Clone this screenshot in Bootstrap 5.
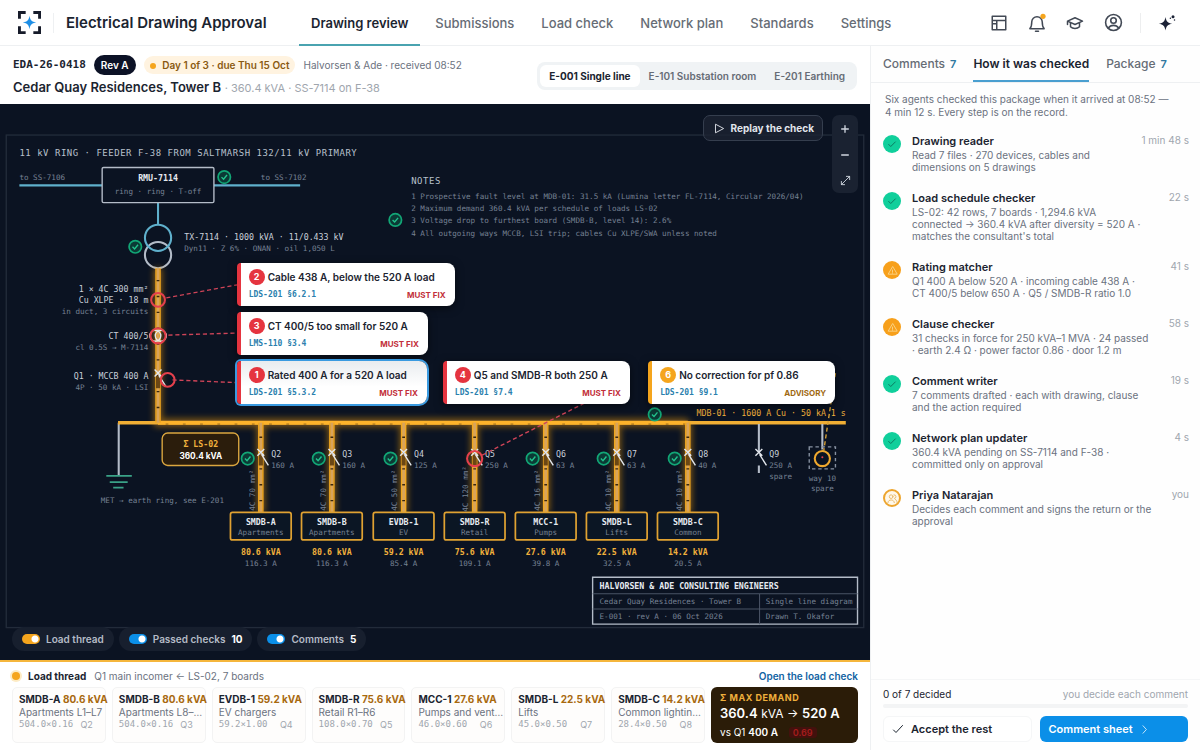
<!DOCTYPE html>
<html lang="en">
<head>
<meta charset="utf-8">
<meta name="viewport" content="width=device-width, initial-scale=1">
<title>Electrical Drawing Approval</title>
<link href="https://cdn.jsdelivr.net/npm/bootstrap@5.3.0/dist/css/bootstrap.min.css" rel="stylesheet">
<style>
:root{--ink:#1b2430;--soft:#6b7280;--faint:#a0a6ae;--amber:#f5a51d;--red:#e5343f;--blue:#0b8fe8;--mono:"DejaVu Sans Mono","Liberation Mono",monospace}
body{font-family:Inter,"Liberation Sans",sans-serif;font-size:10px;line-height:12px;color:var(--ink);background:#fff}
a{text-decoration:none}
button{font:inherit}
.mono{font-family:var(--mono)}
.f10{font-size:10px;line-height:14px}
.f11{font-size:11px;line-height:14px}
.f12{font-size:12px;line-height:16px}
.soft{color:var(--soft)}
.faint{color:var(--faint)}
.ico{fill:none;stroke:currentColor;stroke-width:2;stroke-linecap:round;stroke-linejoin:round}
/* top bar */
.topbar{height:46px;border-bottom:1px solid #eef0f2;padding:0 24px 0 18px}
.brand-name{font-size:15px;line-height:20px;font-weight:600;padding-left:12px;margin-left:12px;border-left:1px solid #eef0f2;width:246px}
.main-tabs{gap:3px}
.main-tabs a{font-size:13px;line-height:46px;height:46px;padding:0 12px;color:#666c75;font-weight:500;border-bottom:2px solid transparent}
.main-tabs a.active{color:var(--ink);font-weight:600;border-color:#4aa3b0}
.tools{gap:20px}
.tools button{border:0;background:none;padding:0;color:#424955;display:flex}
.tools .vr{opacity:.08;margin:0 -3px}
/* page frame */
.review{flex:1 1 72.5%;min-width:0}
.agents{flex:0 0 27.5%;border-left:1px solid #eef0f2;background:#fefefe}
.subhead{padding:9px 13px 8px;height:58px}
.docname{font-size:13px;line-height:18px;margin-top:3px}
.revtag{background:#0c1226;color:#fff;border-radius:10px;padding:3px 7px;font-weight:600}
.duetag{background:#fff3e0;color:#8a5a12;border-radius:10px;padding:2px 6px;font-weight:600}
.dot{width:6px;height:6px;border-radius:50%;background:var(--amber);display:inline-block}
.segments{background:#f0f3f5;border-radius:8px;padding:3px}
.segments button{border:0;background:none;border-radius:6px;padding:4px 9px;font-weight:600;color:#666c75;line-height:14px}
.segments button.active{background:#fff;color:var(--ink);font-weight:700}
/* drawing */
.stage{background:#0b1322;border-bottom:2px solid #f5b63c}
.sheet{aspect-ratio:870/556;width:100%}
.sheet svg.plan{width:100%;height:100%;display:block}
.plan text{font-family:var(--mono);font-size:11px;fill:#768193}
.plan .t12{font-size:12px;fill:#c9d0da}
.plan .t13{font-size:13px;letter-spacing:.06em;fill:#b8c0cc}
.plan .name{font-size:12px;font-weight:700;fill:#e6eaf0}
.plan .load{font-size:12px;font-weight:700;fill:#f0b03c}
.plan .mid{text-anchor:middle}
.plan .end{text-anchor:end}
.plan .hv{stroke:#5fb0cc;stroke-width:3;fill:none}
.plan .grey{stroke:#b4bcc8;stroke-width:3;fill:none}
.plan .lead-red{stroke:#cf4458;stroke-width:2;stroke-dasharray:6 4}
.plan .ring{stroke:#e5404c;stroke-width:3;fill:none}
.callout{border:0;border-left:4px solid var(--red);border-radius:4px 8px 8px 4px;background:#fff;color:var(--ink);padding:6px 9px 5px 8px;min-width:187px;text-align:left;box-shadow:0 2px 8px #0008}
.callout.advice{border-color:var(--amber)}
.callout.picked{box-shadow:0 0 0 2px #3a9ae0;background:linear-gradient(#e9ecef,#fff 60%)}
.callout .top{display:flex;align-items:center;gap:3px}
.callout .num{width:16px;height:16px;border-radius:50%;background:var(--red);color:#fff;font-size:9px;line-height:16px;text-align:center;font-weight:700}
.callout.advice .num{background:var(--amber)}
.callout .ttl{font-weight:600;padding-right:11px;white-space:nowrap}
.callout .ref{font-family:var(--mono);font-size:8px;font-weight:700;color:#2b7fae}
.callout .sev{font-size:8px;font-weight:700;color:#c22f39}
.callout.advice .sev{color:#a06a12}
.c2{left:27.2%;top:28.6%}.c3{left:27.2%;top:37.4%}.c1{left:27.2%;top:46.2%}.c4{left:50.9%;top:46.2%}.c6{left:74.5%;top:46.2%}
.replay{right:47px;top:11px;background:#1b2332cc;border:1px solid #353e4e;border-radius:7px;color:#e1e5eb;font-weight:700;padding:5px 8px 5px 10px;gap:6px}
.zoomer{right:12px;top:11px;background:#1a2231;border-radius:7px;width:26px}
.zoomer button{border:0;background:none;height:26px;width:26px;color:#cfd5de;padding:0}
.layers{left:12px;bottom:9px;gap:5px}
.layers label{background:#171f2e;border-radius:12px;padding:5px 10px;color:#b4bbc6;font-weight:600;gap:6px;line-height:14px}
.layers b{color:#fff;font-weight:700}
.layers input{appearance:none;width:18px;height:10px;margin:0;border-radius:5px;background:radial-gradient(circle at 13px 5px,#fff 3px,transparent 4px) var(--blue)}
.layers .warm input{background-color:var(--amber)}
/* load thread */
.thread{padding:7px 12px 9px}
.thread .halo{width:8px;height:8px;border-radius:50%;background:var(--amber);box-shadow:0 0 0 2px #fdebc4}
.boards{gap:6px}
.board{flex:1 1 0;min-width:0;border:1px solid #f3f3f3;border-radius:5px;background:#fefdfc;padding:5px 0 8px 6px;white-space:nowrap}
.board h3{font-size:10px;line-height:13px;font-weight:700;margin:0}
.board h3 span{color:#a8690f}
.board .rowline{display:flex;justify-content:space-between;padding-right:12px;line-height:13px;color:var(--faint);font-size:9px}
.board .calc{font-family:var(--mono)}
.total{flex:0 0 147px;background:#2b1c08;border-radius:6px;color:#fff;padding:4px 9px;white-space:nowrap}
.total h3{font-size:9px;line-height:14px;font-weight:700;letter-spacing:.06em;color:#f0b03c;margin:0}
.total p{font-size:13px;line-height:16px;margin:0}
.gap-tag{background:#43110d;color:#a31c1c;border-radius:3px;padding:0 4px;font-size:9px;font-weight:600}
/* agents */
.side-tabs{padding:0 12px;gap:17px;border-bottom:1px solid #eef0f2}
.side-tabs a{font-size:12px;line-height:36px;height:36px;color:#666c75;font-weight:500;border-bottom:2px solid transparent;white-space:nowrap}
.side-tabs a.active{color:var(--ink);font-weight:600;border-color:#4a9fd0}
.side-tabs b{font-size:11px;font-weight:600;color:#2f78a0;margin-left:5px}
.intro{padding:10px 14px 0;margin:0 0 15px;line-height:13px}
.steps{padding:0 11px 0 12px;margin:0}
.step{gap:11px;margin-bottom:18px}
.step .mark-dot{flex:none;width:18px;height:18px;margin-top:1px;border-radius:50%;background:#10cf9b;color:#0b6a55;display:flex;align-items:center;justify-content:center}
.step .warn{background:#f7a01b;color:#fbd489}
.step .person{background:#fff8ea;border:2px solid #eda52e;color:#e8b765}
.step h3{font-size:11px;line-height:15px;font-weight:600;margin:0}
.step p{margin:0;max-width:252px}
.decide{padding:0 12px 10px;border-top:1px solid #f5f6f7}
.decide .progress{height:4px;background:#f3f4f5}
.decide .btn{flex:1 1 0;font-size:11px;line-height:14px;font-weight:600;padding:5px 8px;border-radius:6px;text-align:left;display:flex;align-items:center;gap:7px}
.btn-rest{background:#fff;border-color:#f5f6f7;color:var(--ink)}
.btn-sheet{background:var(--blue);color:#fff}
</style>
</head>
<body class="min-vh-100 d-flex flex-column">

<header class="topbar d-flex align-items-center">
  <svg width="23" height="23" viewBox="0 0 24 24" aria-hidden="true"><path d="M1.500 8V1.500H8M16 1.500h6.500V8M22.500 16v6.500H16M8 22.500H1.500V16" fill="none" stroke="#161b2a" stroke-width="3"/><path d="M12 5c1 5 2 6 7 7-5 1-6 2-7 7-1-5-2-6-7-7 5-1 6-2 7-7z" fill="#1e8fe6"/></svg>
  <div class="brand-name">Electrical Drawing Approval</div>
  <nav class="main-tabs d-flex">
    <a href="#" class="active">Drawing review</a><a href="#">Submissions</a><a href="#">Load check</a><a href="#">Network plan</a><a href="#">Standards</a><a href="#">Settings</a>
  </nav>
  <div class="tools d-flex align-items-center ms-auto">
    <button aria-label="Layout"><svg class="ico" width="18" height="18" viewBox="0 0 24 24"><path d="M3 3h18v18H3zM3 8.500h18M9 8.500V21M3 13h6"/></svg></button>
    <button aria-label="Alerts"><svg class="ico" width="18" height="20" viewBox="0 0 24 26"><path d="M2.500 20.500c2-2 2.500-4 2.500-9a7 7 0 0 1 14 0c0 5 .5 7 2.500 9zM10 24h4"/><circle cx="20" cy="4" r="3.500" fill="#f5a51d" stroke="none"/></svg></button>
    <button aria-label="Training"><svg class="ico" width="18" height="18" viewBox="0 0 24 24"><path d="M2 9.500 12 5l10 4.500L12 14zM6 12v5c3 3 9 3 12 0v-5M2 10v4"/></svg></button>
    <button aria-label="Account"><svg class="ico" width="19" height="19" viewBox="0 0 24 24"><circle cx="12" cy="12" r="10"/><circle cx="12" cy="9.500" r="3.500"/><path d="M5.500 19c3-4.500 10-4.500 13 0"/></svg></button>
    <span class="vr"></span>
    <button aria-label="Assistant"><svg width="18" height="18" viewBox="0 0 24 24" fill="#1b2236"><path d="M10 4c1 6 3 8 9 9-6 1-8 3-9 9-1-6-3-8-9-9 6-1 8-3 9-9z"/><circle cx="20" cy="3.500" r="2"/><circle cx="16.500" cy="5.500" r="1"/><circle cx="22" cy="8" r="1"/></svg></button>
  </div>
</header>

<main class="d-flex flex-fill">
<section class="review d-flex flex-column">
  <div class="subhead d-flex justify-content-between">
    <div>
      <div class="d-flex align-items-center gap-2 f10">
        <span class="mono fw-bold f11">EDA-26-0418</span>
        <span class="revtag">Rev A</span>
        <span class="duetag"><span class="dot me-1"></span> Day 1 of 3 · due Thu 15 Oct</span>
        <span class="soft">Halvorsen &amp; Ade · received 08:52</span>
      </div>
      <div class="docname"><strong class="fw-semibold">Cedar Quay Residences, Tower B</strong> <span class="faint f11">· 360.4 kVA · SS-7114 on F-38</span></div>
    </div>
    <div class="segments d-flex align-self-center f10"><button class="active">E-001 Single line</button><button>E-101 Substation room</button><button>E-201 Earthing</button></div>
  </div>

  <div class="stage position-relative overflow-hidden">
    <div class="sheet position-relative">
      <svg class="plan" viewBox="0 0 1261 806" role="img" aria-label="Single line diagram">
        <defs>
          <filter id="glow" filterUnits="userSpaceOnUse" x="0" y="0" width="1261" height="806"><feGaussianBlur stdDeviation="5"/></filter>
          <g id="ok"><circle r="9" fill="#0b3a35" stroke="#12a676" stroke-width="2.500"/><path d="M-4 0l3 3 5-6" fill="none" stroke="#22c48d" stroke-width="2"/></g>
          <g id="brk"><path d="M-5-5 5 5M5-5-5 5M1 3 11 19" stroke="#e3e7ed" stroke-width="2" fill="none"/></g>
          <g id="drop"><path d="M0 0v130" stroke="#d9a45a" stroke-width="5"/><path d="M-3 0v130M3 0v130" stroke="#f2a81f" stroke-width="2"/><path d="M0 20v110" stroke="#3a270c" stroke-width="4" stroke-dasharray="2 21"/><path d="M0 46v16" stroke="#6b4714" stroke-width="6"/><use href="#brk" y="43"/><rect x="-44" y="130" width="88" height="40" rx="3" fill="#0b1624" stroke="#e0a232" stroke-width="2.500"/></g>
        </defs>
        <rect x="9" y="45" width="1243" height="714" fill="none" stroke="#222b3a" stroke-width="2"/>

        <text class="t13" x="28" y="75">11 kV RING · FEEDER F-38 FROM SALTMARSH 132/11 kV PRIMARY</text>
        <path class="hv" d="M28 118h120M310 118h125M229 143v31"/>
        <text x="28" y="110">to SS-7106</text><text x="378" y="110">to SS-7102</text>
        <rect x="148" y="92" width="162" height="51" rx="2" fill="#0b1322" stroke="#b4bcc8" stroke-width="2"/>
        <text class="name mid" x="229" y="112">RMU-7114</text><text class="mid" x="229" y="131">ring · ring · T-off</text>
        <use href="#ok" x="325" y="106"/>
        <circle cx="229" cy="219" r="19" class="grey"/><circle class="hv" cx="229" cy="194" r="19"/>
        <use href="#ok" x="196" y="207"/>
        <text class="t12" x="267" y="197">TX-7114 · 1000 kVA · 11/0.433 kV</text><text x="267" y="213">Dyn11 · Z 6% · ONAN · oil 1,050 L</text>

        <text class="t13" x="596" y="116">NOTES</text>
        <text x="596" y="137">1 Prospective fault level at MDB-01: 31.5 kA (Lumina letter FL-7114, Circular 2026/04)</text>
        <text x="596" y="155">2 Maximum demand 360.4 kVA per schedule of loads LS-02</text>
        <text x="596" y="173">3 Voltage drop to furthest board (SMDB-B, level 14): 2.6%</text>
        <text x="596" y="191">4 All outgoing ways MCCB, LSI trip; cables Cu XLPE/SWA unless noted</text>
        <use href="#ok" x="573" y="168"/>

        <path d="M229 238v224H997M378 462v130M481 462v130M585 462v130M688 462v130M791 462v130M894 462v130M997 462v130" fill="none" stroke="#f59e0b" stroke-width="12" opacity=".5" filter="url(#glow)"/>
        <path d="M172 462v77" class="grey"/>
        <path d="M171 462H1226" stroke="#f0ae34" stroke-width="5"/>
        <path d="M229 462H997" stroke="#fdb32b" stroke-width="6"/>
        <path d="M240 464H997" stroke="#a8741c" stroke-width="2" stroke-dasharray="4 21"/>
        <path d="M229 238v224" stroke="#d9a45a" stroke-width="5"/><path d="M226 238v224M232 238v224" stroke="#f2a81f" stroke-width="2"/>
        <path d="M229 255v205" stroke="#3a270c" stroke-width="4" stroke-dasharray="2 21"/><path d="M229 394v18" stroke="#6b4714" stroke-width="6"/>
        <use href="#brk" x="229" y="390"/>
        <g fill="none" stroke="#e3e7ed" stroke-width="2"><circle cx="225" cy="336" r="8"/><circle cx="233" cy="336" r="8"/></g>
        <circle class="ring" cx="229" cy="284" r="10"/><circle class="ring" cx="229" cy="336" r="11"/><circle class="ring" cx="243" cy="400" r="10"/>
        <path class="lead-red" d="M241 281 345 262M244 335 345 332M250 400 345 404"/>
        <text class="t12 end" x="215" y="272">1 × 4C 300 mm²</text><text class="t12 end" x="215" y="288">Cu XLPE · 18 m</text><text class="end" x="215" y="305">in duct, 3 circuits</text>
        <text class="t12 end" x="215" y="341">CT 400/5</text><text class="end" x="215" y="357">cl 0.5S → M-7114</text>
        <text class="t12 end" x="215" y="398">Q1 · MCCB 400 A</text><text class="end" x="215" y="414">4P · 50 kA · LSI</text>

        <path d="M154 539h37M159 548h26M164 556h15" stroke="#3aa287" stroke-width="2.500"/>
        <text x="146" y="579">MET → earth ring, see E-201</text>
        <rect x="235" y="477" width="111" height="47" rx="8" fill="#2b1d0c" stroke="#dca73f" stroke-width="2"/>
        <text class="load mid" x="291" y="497">Σ LS-02</text><text class="mid" x="291" y="514" style="font:700 12px Inter;fill:#fff">360.4 kVA</text>

        <use href="#drop" x="378" y="462"/><use href="#drop" x="481" y="462"/><use href="#drop" x="585" y="462"/><use href="#drop" x="688" y="462"/><use href="#drop" x="791" y="462"/><use href="#drop" x="894" y="462"/><use href="#drop" x="997" y="462"/>
        <use href="#ok" x="359" y="514"/><use href="#ok" x="462" y="514"/><use href="#ok" x="566" y="514"/><use href="#ok" x="772" y="514"/><use href="#ok" x="875" y="514"/><use href="#ok" x="978" y="514"/><use href="#ok" x="949" y="450"/>

        <g transform="translate(378 0)"><text class="t12" x="15" y="511">Q2</text><text x="15" y="527">160 A</text><text class="mid" transform="translate(-9 560) rotate(-90)">4C 70 mm²</text><text class="name mid" y="610">SMDB-A</text><text class="mid" y="625">Apartments</text><text class="load mid" y="654">80.6 kVA</text><text class="mid" y="670">116.3 A</text></g>
        <g transform="translate(481 0)"><text class="t12" x="15" y="511">Q3</text><text x="15" y="527">160 A</text><text class="mid" transform="translate(-9 560) rotate(-90)">4C 70 mm²</text><text class="name mid" y="610">SMDB-B</text><text class="mid" y="625">Apartments</text><text class="load mid" y="654">80.6 kVA</text><text class="mid" y="670">116.3 A</text></g>
        <g transform="translate(585 0)"><text class="t12" x="15" y="511">Q4</text><text x="15" y="527">125 A</text><text class="mid" transform="translate(-9 560) rotate(-90)">4C 50 mm²</text><text class="name mid" y="610">EVDB-1</text><text class="mid" y="625">EV</text><text class="load mid" y="654">59.2 kVA</text><text class="mid" y="670">85.4 A</text></g>
        <g transform="translate(688 0)"><text class="t12" x="15" y="511">Q5</text><text x="15" y="527">250 A</text><text class="mid" transform="translate(-9 558) rotate(-90)">4C 120 mm²</text><text class="name mid" y="610">SMDB-R</text><text class="mid" y="625">Retail</text><text class="load mid" y="654">75.6 kVA</text><text class="mid" y="670">109.1 A</text></g>
        <g transform="translate(791 0)"><text class="t12" x="15" y="511">Q6</text><text x="15" y="527">63 A</text><text class="mid" transform="translate(-9 560) rotate(-90)">4C 16 mm²</text><text class="name mid" y="610">MCC-1</text><text class="mid" y="625">Pumps</text><text class="load mid" y="654">27.6 kVA</text><text class="mid" y="670">39.8 A</text></g>
        <g transform="translate(894 0)"><text class="t12" x="15" y="511">Q7</text><text x="15" y="527">63 A</text><text class="mid" transform="translate(-9 560) rotate(-90)">4C 10 mm²</text><text class="name mid" y="610">SMDB-L</text><text class="mid" y="625">Lifts</text><text class="load mid" y="654">22.5 kVA</text><text class="mid" y="670">32.5 A</text></g>
        <g transform="translate(997 0)"><text class="t12" x="15" y="511">Q8</text><text x="15" y="527">40 A</text><text class="mid" transform="translate(-9 560) rotate(-90)">4C 10 mm²</text><text class="name mid" y="610">SMDB-C</text><text class="mid" y="625">Common</text><text class="load mid" y="654">14.2 kVA</text><text class="mid" y="670">20.5 A</text></g>

        <circle class="ring" cx="688" cy="514" r="11"/><path class="lead-red" d="M699 509 870 422"/>
        <path class="grey" d="M1100 464v41M1100 524v11M1192 464v37"/><use href="#brk" x="1100" y="505"/>
        <text class="t12" x="1115" y="511">Q9</text><text x="1115" y="527">250 A</text><text x="1115" y="543">spare</text>
        <rect x="1173" y="497" width="38" height="32" fill="none" stroke="#8791a1" stroke-width="2" stroke-dasharray="5 4"/>
        <circle cx="1192" cy="514" r="11" fill="none" stroke="#f0a92e" stroke-width="3"/><circle cx="1192" cy="512" r="1.500" fill="#e5404c"/>
        <path d="M1211 390 1194 503" stroke="#d6a035" stroke-width="2" stroke-dasharray="6 4"/>
        <text class="mid" x="1192" y="547">way 10</text><text class="mid" x="1192" y="561">spare</text>
        <text class="load end" x="1226" y="452" style="font-weight:500">MDB-01 · 1600 A Cu · 50 kA 1 s</text>

        <path d="M859 686h384v68H859z" fill="#0b1322" stroke="#b4bcc8" stroke-width="2"/><path d="M859 710h384M859 732h384M1101 710v44" stroke="#4a5465" stroke-width="1.500"/>
        <text class="name" x="869" y="703">HALVORSEN &amp; ADE CONSULTING ENGINEERS</text>
        <text x="869" y="725">Cedar Quay Residences · Tower B</text><text x="1110" y="725">Single line diagram</text>
        <text x="869" y="747">E-001 · rev A · 06 Oct 2026</text><text x="1110" y="747">Drawn T. Okafor</text>
      </svg>

      <button class="callout c2 position-absolute"><span class="top"><span class="num">2</span><span class="ttl">Cable 438 A, below the 520 A load</span></span><span class="d-flex justify-content-between mt-1"><span class="ref">LDS-201 §6.2.1</span><span class="sev">MUST FIX</span></span></button>
      <button class="callout c3 position-absolute"><span class="top"><span class="num">3</span><span class="ttl">CT 400/5 too small for 520 A</span></span><span class="d-flex justify-content-between mt-1"><span class="ref">LMS-110 §3.4</span><span class="sev">MUST FIX</span></span></button>
      <button class="callout picked c1 position-absolute"><span class="top"><span class="num">1</span><span class="ttl">Rated 400 A for a 520 A load</span></span><span class="d-flex justify-content-between mt-1"><span class="ref">LDS-201 §5.3.2</span><span class="sev">MUST FIX</span></span></button>
      <button class="callout c4 position-absolute"><span class="top"><span class="num">4</span><span class="ttl">Q5 and SMDB-R both 250 A</span></span><span class="d-flex justify-content-between mt-1"><span class="ref">LDS-201 §7.4</span><span class="sev">MUST FIX</span></span></button>
      <button class="callout advice c6 position-absolute"><span class="top"><span class="num">6</span><span class="ttl">No correction for pf 0.86</span></span><span class="d-flex justify-content-between mt-1"><span class="ref">LDS-201 §9.1</span><span class="sev">ADVISORY</span></span></button>
    </div>
    <button class="replay position-absolute d-flex align-items-center f10"><svg class="ico" width="11" height="11" viewBox="0 0 24 24"><path d="M4 3l17 9-17 9z"/></svg>Replay the check</button>
    <div class="zoomer position-absolute d-flex flex-column">
      <button aria-label="Zoom in"><svg class="ico" width="8" height="8" viewBox="0 0 12 12"><path d="M6 1v10M1 6h10"/></svg></button>
      <button aria-label="Zoom out"><svg class="ico" width="8" height="8" viewBox="0 0 12 12"><path d="M1 6h10"/></svg></button>
      <button aria-label="Fit"><svg class="ico" width="11" height="11" viewBox="0 0 24 24"><path d="M3 21 21 3M14 3h7v7M10 21H3v-7"/></svg></button>
    </div>
    <div class="layers position-absolute d-flex f10">
      <label class="warm d-flex align-items-center"><input type="checkbox" checked>Load thread</label>
      <label class="d-flex align-items-center"><input type="checkbox" checked>Passed checks <b>10</b></label>
      <label class="d-flex align-items-center"><input type="checkbox" checked>Comments <b>5</b></label>
    </div>
  </div>

  <div class="thread flex-fill">
    <div class="d-flex align-items-center gap-2 f10 mb-1"><span class="halo"></span><strong>Load thread</strong><span class="soft">Q1 main incomer ← LS-02, 7 boards</span><a href="#" class="ms-auto fw-semibold" style="color:#1263a3">Open the load check</a></div>
    <div class="boards d-flex">
      <div class="board"><h3>SMDB-A <span>80.6 kVA</span></h3><div class="soft">Apartments L1–L7</div><div class="rowline"><span class="calc">504.0×0.16</span><span>Q2</span></div></div>
      <div class="board"><h3>SMDB-B <span>80.6 kVA</span></h3><div class="soft">Apartments L8–…</div><div class="rowline"><span class="calc">504.0×0.16</span><span>Q3</span></div></div>
      <div class="board"><h3>EVDB-1 <span>59.2 kVA</span></h3><div class="soft">EV chargers</div><div class="rowline"><span class="calc">59.2×1.00</span><span>Q4</span></div></div>
      <div class="board"><h3>SMDB-R <span>75.6 kVA</span></h3><div class="soft">Retail R1–R6</div><div class="rowline"><span class="calc">108.0×0.70</span><span>Q5</span></div></div>
      <div class="board"><h3>MCC-1 <span>27.6 kVA</span></h3><div class="soft">Pumps and vent…</div><div class="rowline"><span class="calc">46.0×0.60</span><span>Q6</span></div></div>
      <div class="board"><h3>SMDB-L <span>22.5 kVA</span></h3><div class="soft">Lifts</div><div class="rowline"><span class="calc">45.0×0.50</span><span>Q7</span></div></div>
      <div class="board"><h3>SMDB-C <span>14.2 kVA</span></h3><div class="soft">Common lightin…</div><div class="rowline"><span class="calc">28.4×0.50</span><span>Q8</span></div></div>
      <div class="total"><h3>Σ MAX DEMAND</h3><p><strong class="fw-semibold">360.4</strong> <span class="f12">kVA →</span> <strong class="fw-semibold">520 A</strong></p><div class="mt-1">vs Q1 <strong class="fw-semibold">400 A</strong> <span class="gap-tag ms-2">0.69</span></div></div>
    </div>
  </div>
</section>

<aside class="agents d-flex flex-column">
  <nav class="side-tabs d-flex"><a href="#">Comments<b>7</b></a><a href="#" class="active">How it was checked</a><a href="#">Package<b>7</b></a></nav>
  <p class="intro soft">Six agents checked this package when it arrived at 08:52 —<br>4 min 12 s. Every step is on the record.</p>
  <ol class="steps list-unstyled flex-fill">
    <li class="step d-flex"><span class="mark-dot"><svg class="ico" width="10" height="10" viewBox="0 0 24 24"><path d="M4 13l5 5L20 7"/></svg></span><div class="flex-fill"><div class="d-flex justify-content-between"><h3>Drawing reader</h3><span class="faint">1 min 48 s</span></div><p class="soft">Read 7 files · 270 devices, cables and<br>dimensions on 5 drawings</p></div></li>
    <li class="step d-flex"><span class="mark-dot"><svg class="ico" width="10" height="10" viewBox="0 0 24 24"><path d="M4 13l5 5L20 7"/></svg></span><div class="flex-fill"><div class="d-flex justify-content-between"><h3>Load schedule checker</h3><span class="faint">22 s</span></div><p class="soft">LS-02: 42 rows, 7 boards · 1,294.6 kVA<br>connected → 360.4 kVA after diversity = 520 A ·<br>matches the consultant's total</p></div></li>
    <li class="step d-flex"><span class="mark-dot warn"><svg class="ico" width="11" height="11" viewBox="0 0 24 24"><path d="M12 4 2.500 20h19zM12 11v4M12 17v1"/></svg></span><div class="flex-fill"><div class="d-flex justify-content-between"><h3>Rating matcher</h3><span class="faint">41 s</span></div><p class="soft">Q1 400 A below 520 A · incoming cable 438 A ·<br>CT 400/5 below 650 A · Q5 / SMDB-R ratio 1.0</p></div></li>
    <li class="step d-flex"><span class="mark-dot warn"><svg class="ico" width="11" height="11" viewBox="0 0 24 24"><path d="M12 4 2.500 20h19zM12 11v4M12 17v1"/></svg></span><div class="flex-fill"><div class="d-flex justify-content-between"><h3>Clause checker</h3><span class="faint">58 s</span></div><p class="soft">31 checks in force for 250 kVA–1 MVA · 24 passed<br>· earth 2.4 Ω · power factor 0.86 · door 1.2 m</p></div></li>
    <li class="step d-flex"><span class="mark-dot"><svg class="ico" width="10" height="10" viewBox="0 0 24 24"><path d="M4 13l5 5L20 7"/></svg></span><div class="flex-fill"><div class="d-flex justify-content-between"><h3>Comment writer</h3><span class="faint">19 s</span></div><p class="soft">7 comments drafted · each with drawing, clause<br>and the action required</p></div></li>
    <li class="step d-flex"><span class="mark-dot"><svg class="ico" width="10" height="10" viewBox="0 0 24 24"><path d="M4 13l5 5L20 7"/></svg></span><div class="flex-fill"><div class="d-flex justify-content-between"><h3>Network plan updater</h3><span class="faint">4 s</span></div><p class="soft">360.4 kVA pending on SS-7114 and F-38 ·<br>committed only on approval</p></div></li>
    <li class="step d-flex"><span class="mark-dot person"><svg class="ico" width="11" height="11" viewBox="0 0 24 24"><circle cx="9" cy="8" r="4"/><path d="M2 21c0-8 14-8 14 0M15 4a4 4 0 0 1 1 8M18 14c3 1 4 4 4 7"/></svg></span><div class="flex-fill"><div class="d-flex justify-content-between"><h3>Priya Natarajan</h3><span class="faint">you</span></div><p class="soft">Decides each comment and signs the return or the<br>approval</p></div></li>
  </ol>
  <div class="decide">
    <div class="d-flex justify-content-between pt-2 mb-1"><span>0 of 7 decided</span><span class="faint">you decide each comment</span></div>
    <div class="progress mb-2"></div>
    <div class="d-flex gap-2">
      <button class="btn btn-rest"><svg class="ico" width="12" height="12" viewBox="0 0 24 24"><path d="M3 14l5 5L21 5"/></svg>Accept the rest</button>
      <button class="btn btn-sheet">Comment sheet <svg class="ico" width="9" height="9" viewBox="0 0 24 24"><path d="M8 2l9 10-9 10"/></svg></button>
    </div>
  </div>
</aside>
</main>
<script src="https://cdn.jsdelivr.net/npm/bootstrap@5.3.0/dist/js/bootstrap.bundle.min.js"></script>
</body>
</html>
